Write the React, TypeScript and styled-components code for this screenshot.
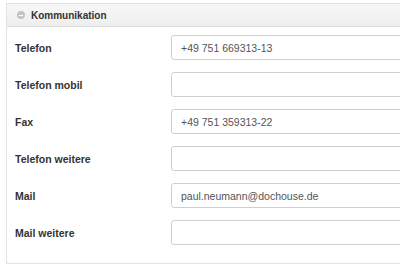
import styled, { createGlobalStyle } from "styled-components";

const GlobalStyle = createGlobalStyle`
  html, body {
    margin: 0;
    padding: 0;
    background: #fff;
    overflow: hidden;
    font-family: "Liberation Sans", Arial, sans-serif;
  }
`;

const Page = styled.div`
  width: 400px;
  height: 272px;
  overflow: hidden;
  padding: 3px 0 0 6px;
  box-sizing: border-box;
`;

const Panel = styled.section`
  width: 430px;
  border: 1px solid #e2e2e2;
  background: #fff;
  box-sizing: border-box;
`;

const Header = styled.div`
  height: 23px;
  display: flex;
  align-items: center;
  gap: 6px;
  padding-left: 10px;
  background: linear-gradient(#f7f7f7, #eeeeee);
  border-bottom: 1px solid #dedede;
  box-sizing: border-box;
`;

const Toggle = styled.span`
  width: 8px;
  height: 8px;
  border-radius: 50%;
  background: #c4c4c4;
  position: relative;
  &::after {
    content: "";
    position: absolute;
    left: 2px;
    top: 3.5px;
    width: 4px;
    height: 1px;
    background: #fff;
  }
`;

const Title = styled.h3`
  margin: 0;
  font-size: 10px;
  font-weight: bold;
  color: #333;
`;

const Body = styled.div`
  display: flex;
  flex-direction: column;
  gap: 12px;
  padding: 8px 0 18px 8px;
`;

const Row = styled.div`
  display: grid;
  grid-template-columns: 156px 1fr;
  align-items: center;
`;

const Label = styled.label`
  font-size: 10.5px;
  font-weight: bold;
  color: #333;
`;

const Field = styled.input`
  height: 25px;
  box-sizing: border-box;
  border: 1px solid #cfcfcf;
  border-radius: 3px;
  padding: 0 9px;
  font-family: "Liberation Sans", Arial, sans-serif;
  font-size: 10.5px;
  color: #555;
  background: #fff;
  outline: none;
`;

const fields = [
  { label: "Telefon", value: "+49 751 669313-13" },
  { label: "Telefon mobil", value: "" },
  { label: "Fax", value: "+49 751 359313-22" },
  { label: "Telefon weitere", value: "" },
  { label: "Mail", value: "paul.neumann@dochouse.de" },
  { label: "Mail weitere", value: "" },
];

export default function App() {
  return (
    <Page>
      <GlobalStyle />
      <Panel>
        <Header>
          <Toggle />
          <Title>Kommunikation</Title>
        </Header>
        <Body>
          {fields.map((f) => (
            <Row key={f.label}>
              <Label>{f.label}</Label>
              <Field defaultValue={f.value} />
            </Row>
          ))}
        </Body>
      </Panel>
    </Page>
  );
}
